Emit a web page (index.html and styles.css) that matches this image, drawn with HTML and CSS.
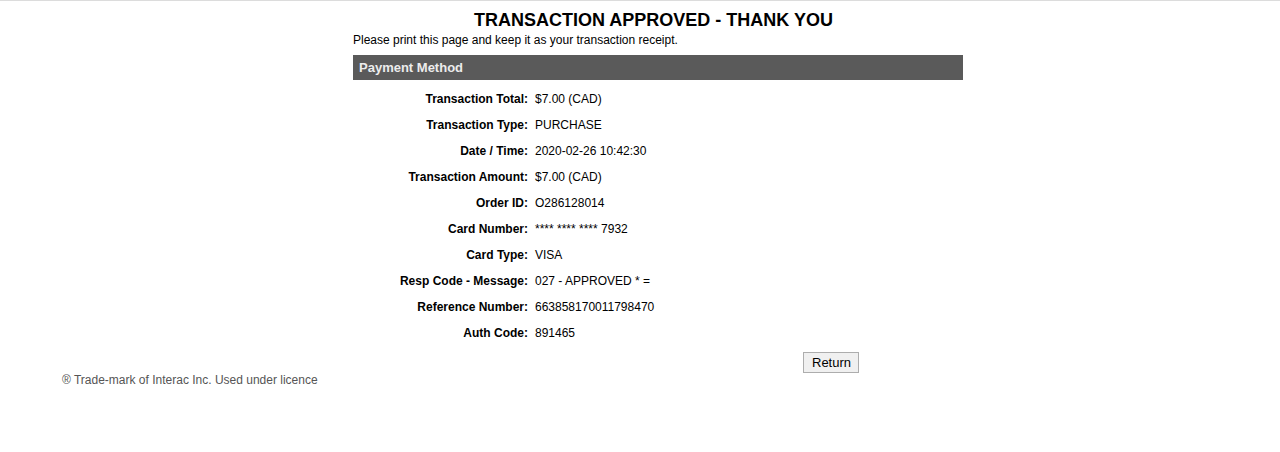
FILE: index.html
```html
<!DOCTYPE html>
<html lang="en">
<head>
    <meta charset="UTF-8">
    <title>Transaction Approved</title>
    <link rel="stylesheet" href="styles.css">
</head>
<body>
    <div class="receipt">
        <h1>TRANSACTION APPROVED - THANK YOU</h1>
        <p class="note">Please print this page and keep it as your transaction receipt.</p>
        <div class="section-head">Payment Method</div>
        <table class="details">
            <tr><th>Transaction Total:</th><td>$7.00 (CAD)</td></tr>
            <tr><th>Transaction Type:</th><td>PURCHASE</td></tr>
            <tr><th>Date / Time:</th><td>2020-02-26 10:42:30</td></tr>
            <tr><th>Transaction Amount:</th><td>$7.00 (CAD)</td></tr>
            <tr><th>Order ID:</th><td>O286128014</td></tr>
            <tr><th>Card Number:</th><td>**** **** **** 7932</td></tr>
            <tr><th>Card Type:</th><td>VISA</td></tr>
            <tr><th>Resp Code - Message:</th><td>027 - APPROVED * =</td></tr>
            <tr><th>Reference Number:</th><td>663858170011798470</td></tr>
            <tr><th>Auth Code:</th><td>891465</td></tr>
        </table>
        <div class="actions">
            <button type="button">Return</button>
        </div>
    </div>
    <p class="footer">&reg; Trade-mark of Interac Inc. Used under licence</p>
</body>
</html>
```

FILE: styles.css
```css
body {
    margin: 0;
    border-top: 1px solid #dcdcdc;
    font-family: "Liberation Sans", Arial, sans-serif;
    font-size: 12px;
    color: #000;
    background: #fff;
}
.receipt {
    width: 610px;
    margin-left: 353px;
}
h1 {
    margin: 0;
    padding: 9px 9px 0 0;
    height: 20px;
    line-height: 20px;
    font-size: 18px;
    text-align: center;
}
.note {
    margin: 0;
    height: 25px;
    line-height: 20px;
}
.section-head {
    height: 25px;
    line-height: 25px;
    padding-left: 6px;
    background-color: #5a5a5a;
    color: #ececec;
    font-weight: bold;
    font-size: 13px;
}
.details {
    border-collapse: collapse;
    margin-top: 6px;
}
.details th {
    width: 175px;
    height: 26px;
    padding: 0;
    text-align: right;
    font-weight: bold;
}
.details td {
    height: 26px;
    padding: 0 0 0 7px;
}
.actions {
    margin-top: 6px;
    padding-left: 450px;
}
.actions button {
    font-family: "Liberation Sans", Arial, sans-serif;
    font-size: 13px;
    height: 21px;
    padding: 0 7px 0 8px;
    border: 1px solid #adadad;
    background: #f0f0f0;
    border-radius: 0;
}
.footer {
    margin: 0 0 0 62px;
    color: #555;
}
```
